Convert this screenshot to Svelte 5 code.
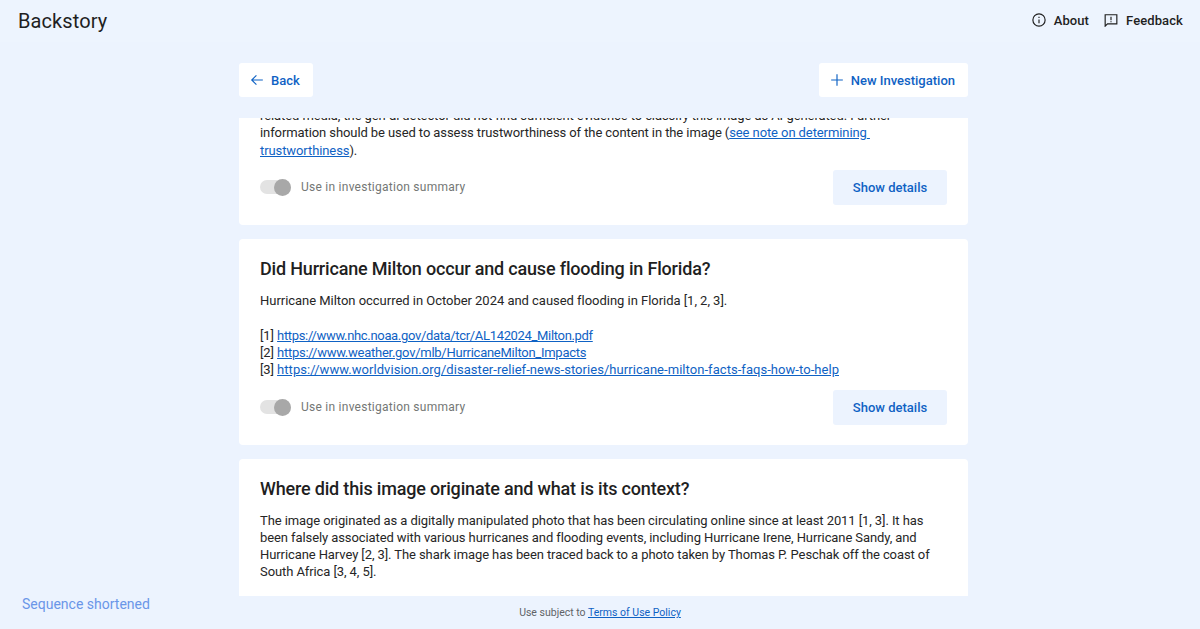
<script>
    const links = [
        { url: "https://www.nhc.noaa.gov/data/tcr/AL142024_Milton.pdf", spacing: -0.33 },
        { url: "https://www.weather.gov/mlb/HurricaneMilton_Impacts", spacing: -0.26 },
        { url: "https://www.worldvision.org/disaster-relief-news-stories/hurricane-milton-facts-faqs-how-to-help", spacing: 0.05 }
    ];
</script>

{#snippet actions()}
    <div class="actions">
        <div class="toggle-row">
            <span class="toggle"><span class="thumb"></span></span>
            <span class="toggle-label">Use in investigation summary</span>
        </div>
        <button class="details">Show details</button>
    </div>
{/snippet}

<div class="page">
    <header class="topbar">
        <div class="logo">Backstory</div>
        <nav class="nav">
            <a class="nav-item" href="#about">
                <svg width="14" height="14" viewBox="0 0 24 24" fill="none" stroke="#1f1f1f" stroke-width="2">
                    <circle cx="12" cy="12" r="10.5" />
                    <path d="M12 11v6.5M12 6.5v2" />
                </svg>
                About
            </a>
            <a class="nav-item" href="#feedback">
                <svg width="14" height="14" viewBox="0 0 24 24" fill="none" stroke="#1f1f1f" stroke-width="2">
                    <path d="M2 3h20v15.5H6L2 22.500z" stroke-linejoin="miter" />
                    <path d="M12 6.500v6M12 14v2" />
                </svg>
                Feedback
            </a>
        </nav>
    </header>

    <main class="main">
        <div class="toolbar">
            <button class="tool">
                <svg width="14" height="14" viewBox="0 0 24 24" fill="none" stroke="#0f62c4" stroke-width="2">
                    <path d="M22 12H3M11 4l-8 8 8 8" />
                </svg>
                Back
            </button>
            <button class="tool">
                <svg width="14" height="14" viewBox="0 0 24 24" fill="none" stroke="#0f62c4" stroke-width="2">
                    <path d="M12 2v20M2 12h20" />
                </svg>
                New Investigation
            </button>
        </div>

        <div class="scroller">
            <section class="card first">
                <p>related media, the gen-ai detector did not find sufficient evidence to classify this image as AI-generated. Further information should be used to assess trustworthiness of the content in the image (<a class="note" href="#note">see note on determining trustworthiness</a>).</p>
                {@render actions()}
            </section>

            <section class="card">
                <h2>Did Hurricane Milton occur and cause flooding in Florida?</h2>
                <p class="lead">Hurricane Milton occurred in October 2024 and caused flooding in Florida [1, 2, 3].</p>
                <p class="refs">
                    {#each links as link, i}
                        [{i + 1}] <a href={link.url} style="letter-spacing: {link.spacing}px">{link.url}</a><br />
                    {/each}
                </p>
                {@render actions()}
            </section>

            <section class="card">
                <h2>Where did this image originate and what is its context?</h2>
                <p>The image originated as a digitally manipulated photo that has been circulating online since at least 2011 [1, 3]. It has been falsely associated with various hurricanes and flooding events, including Hurricane Irene, Hurricane Sandy, and Hurricane Harvey [2, 3]. The shark image has been traced back to a photo taken by Thomas P. Peschak off the coast of South Africa [3, 4, 5].</p>
            </section>
        </div>
    </main>

    <footer class="footer">
        <span class="shortened">Sequence shortened</span>
        <span class="terms">Use subject to <a href="#terms">Terms of Use Policy</a></span>
    </footer>
</div>

<style>
    :global(body) {
        margin: 0;
        background: #ecf3fe;
    }

    .page {
        height: 629px;
        display: flex;
        flex-direction: column;
        overflow: hidden;
        font-family: Roboto, "Liberation Sans", sans-serif;
        color: #1f1f1f;
    }

    .topbar {
        height: 42px;
        flex: none;
        display: flex;
        justify-content: space-between;
        align-items: center;
        padding: 0 17px 0 18px;
        background: #edf4fe;
    }

    .logo {
        font-size: 20px;
        letter-spacing: 0.1px;
        color: #1f1f1f;
    }

    .nav {
        display: flex;
        gap: 15px;
        padding-bottom: 2px;
    }

    .nav-item {
        display: flex;
        align-items: center;
        gap: 8px;
        font-size: 13px;
        font-weight: 500;
        letter-spacing: 0.1px;
        color: #1f1f1f;
        text-decoration: none;
    }

    .main {
        width: 729px;
        margin-left: 239px;
        flex: none;
        display: flex;
        flex-direction: column;
    }

    .toolbar {
        display: flex;
        justify-content: space-between;
        padding-top: 21px;
        margin-bottom: 21px;
    }

    .tool {
        height: 34px;
        display: flex;
        align-items: center;
        gap: 7px;
        padding: 0 13px 0 11px;
        border: none;
        border-radius: 3px;
        background: #fff;
        color: #0f62c4;
        font: 500 13px Roboto, sans-serif;
    }

    .scroller {
        height: 478px;
        overflow: hidden;
        display: flex;
        flex-direction: column;
        gap: 14px;
    }

    .card {
        flex: none;
        background: #fff;
        border-radius: 4px;
        padding: 21px 21px 20px;
    }

    .card.first {
        margin-top: -32px;
    }

    h2 {
        margin: 0 0 15px;
        font-size: 18px;
        line-height: 17px;
        font-weight: 500;
        letter-spacing: -0.18px;
        color: #1f1f1f;
    }

    p {
        margin: 0;
        font-size: 13px;
        line-height: 17.3px;
        letter-spacing: -0.09px;
        color: #262626;
    }

    .lead {
        letter-spacing: -0.03px;
    }

    .refs {
        margin-top: 17.5px;
    }

    .note {
        white-space: pre-wrap;
    }

    a {
        color: #0f62c4;
    }

    .actions {
        display: flex;
        justify-content: space-between;
        align-items: center;
        margin-top: 11px;
    }

    .toggle-row {
        display: flex;
        align-items: center;
        gap: 10px;
    }

    .toggle {
        position: relative;
        width: 31px;
        height: 14px;
        border-radius: 7px;
        background: #e3e3e3;
    }

    .thumb {
        position: absolute;
        right: 0;
        top: -1.5px;
        width: 17px;
        height: 17px;
        border-radius: 50%;
        background: #a8a8a8;
    }

    .toggle-label {
        font-size: 12px;
        letter-spacing: 0.25px;
        color: #747775;
    }

    .details {
        width: 114px;
        height: 35px;
        border: none;
        border-radius: 3px;
        background: #ecf3fe;
        color: #0f62c4;
        font: 500 13px Roboto, sans-serif;
    }

    .footer {
        position: relative;
        flex: 1;
        display: flex;
        justify-content: center;
        align-items: center;
    }

    .shortened {
        position: absolute;
        left: 22px;
        top: 0;
        font-size: 14px;
        color: #6a96e8;
    }

    .terms {
        font-size: 10.5px;
        color: #5f6368;
    }

    .terms a {
        color: #0f62c4;
    }
</style>
